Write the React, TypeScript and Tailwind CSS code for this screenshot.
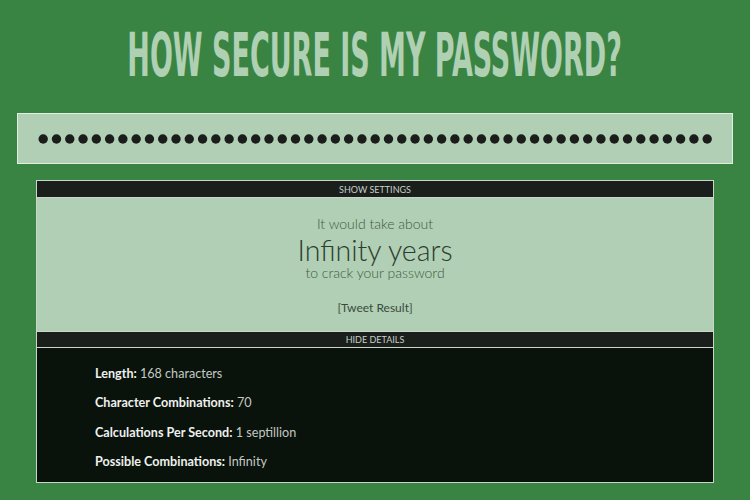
import React from 'react'

const dots = Array.from({ length: 51 })

const details = [
  { label: 'Length:', value: '168 characters' },
  { label: 'Character Combinations:', value: '70' },
  { label: 'Calculations Per Second:', value: '1 septillion' },
  { label: 'Possible Combinations:', value: 'Infinity' },
]

export default function App() {
  return (
    <div className="w-[750px] h-[500px] bg-[#3a8443] font-['Lato',sans-serif] overflow-hidden">
      {/* TITLE */}
      <h1 className="h-[113px] pt-[23px] flex justify-center">
        <span className="whitespace-nowrap text-[60px] leading-[64px] font-bold text-[#b0d0b4] font-['DejaVu_Sans',sans-serif] [font-stretch:condensed] scale-x-[0.5]">
          HOW SECURE IS MY PASSWORD?
        </span>
      </h1>

      {/* PASSWORD FIELD */}
      <div className="mx-[17px] h-[51px] border border-[#dfeee0] bg-[#b0cfb4] flex items-center">
        <svg width="714" height="14" viewBox="0 0 714 14" className="block">
          {dots.map((_, i) => (
            <circle key={i} cx={25.2 + i * 13.28} cy={7} r={4.7} fill="#1a1d1a" />
          ))}
        </svg>
      </div>

      {/* RESULT PANEL */}
      <div className="mx-[36px] mt-[16px] border border-[#c9d6c9]">
        <div className="h-[17px] bg-[#1a1f1c] text-[#c8cfc9] text-[9px] leading-[17px] text-center uppercase border-b border-[#c9d6c9]">
          Show Settings
        </div>
        <div className="bg-[#b0cfb4] h-[133px] flex flex-col items-center text-[#3d5a42] pt-[17px]">
          <p className="text-[14px] leading-[18px] font-light">It would take about</p>
          <p className="mt-[2px] text-[28.5px] leading-[30px] font-light text-[#2c3d2f]">Infinity years</p>
          <p className="text-[14px] leading-[16px] font-light">to crack your password</p>
          <p className="mt-[20px] text-[12px] leading-[14px] text-[#3a4a3d]">[Tweet Result]</p>
        </div>
        <div className="h-[17px] bg-[#1a1f1c] text-[#c8cfc9] text-[9px] leading-[16px] text-center uppercase border-t border-b border-[#c9d6c9]">
          Hide Details
        </div>
        <div className="bg-[#0a130b] h-[134px] pl-[58px] pt-[17px] flex flex-col gap-[12.3px]">
          {details.map((d) => (
            <p key={d.label} className="text-[12.6px] leading-[17px] text-[#c3c8c3]">
              <span className="font-bold text-[#eef0ee]">{d.label}</span> {d.value}
            </p>
          ))}
        </div>
      </div>
    </div>
  )
}
